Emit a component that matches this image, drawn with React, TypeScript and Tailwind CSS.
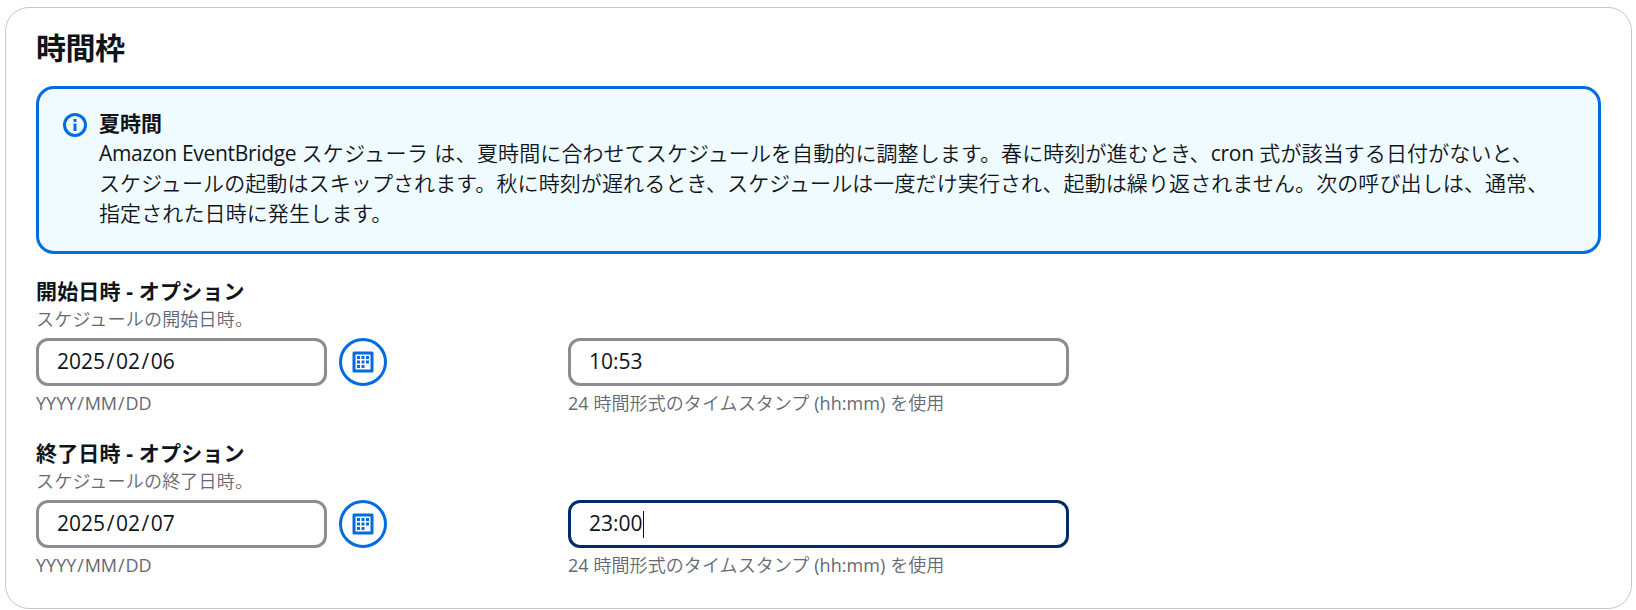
type DateTimeFieldProps = {
  label: string;
  description: string;
  date: string;
  time: string;
  focused?: boolean;
};

const fields: DateTimeFieldProps[] = [
  {
    label: "開始日時 - オプション",
    description: "スケジュールの開始日時。",
    date: "2025/02/06",
    time: "10:53",
  },
  {
    label: "終了日時 - オプション",
    description: "スケジュールの終了日時。",
    date: "2025/02/07",
    time: "23:00",
    focused: true,
  },
];

function InfoIcon() {
  return (
    <svg className="h-6 w-6 shrink-0 text-[#006ce0]" viewBox="0 0 16 16" fill="none" stroke="currentColor" strokeWidth="2">
      <circle cx="8" cy="8" r="7" />
      <path d="M8 12V7M8 6V4" />
    </svg>
  );
}

function CalendarIcon() {
  return (
    <svg className="h-6 w-6" viewBox="0 0 16 16" fill="none" stroke="currentColor" strokeWidth="2">
      <rect x="2" y="2" width="12" height="12" strokeLinejoin="round" />
      <path d="M4 5h2M7 5h2M10 5h2M4 8h2M7 8h2M10 8h2M4 11h2M7 11h2" />
    </svg>
  );
}

function DateTimeField({ label, description, date, time, focused }: DateTimeFieldProps) {
  const [year, month, day] = date.split("/");

  return (
    <section className="h-[162px]">
      <h3 className="text-[21px] leading-[30px] font-bold tracking-[0.17px]">{label}</h3>
      <p className="mt-px text-[18px] leading-[24px] font-[350] tracking-[0.2px] text-[#656871]">{description}</p>
      <div className="mt-[7px] flex">
        <div className="w-[532px]">
          <div className="flex gap-3">
            <div className="flex h-12 w-[291px] items-center rounded-xl border-3 border-[#8c8c94] px-[18px] text-[21px]">
              <span>{year}</span>
              <span className="mx-[1.6px]">/</span>
              <span>{month}</span>
              <span className="mx-[1.6px]">/</span>
              <span>{day}</span>
            </div>
            <button
              type="button"
              className="flex h-12 w-12 items-center justify-center rounded-full border-3 border-[#006ce0] text-[#006ce0]"
              aria-label="カレンダー"
            >
              <CalendarIcon />
            </button>
          </div>
          <p className="mt-[5px] text-[18px] leading-[24px] text-[#656871]">
            YYYY<span className="mx-[0.9px]">/</span>MM<span className="mx-[0.9px]">/</span>DD
          </p>
        </div>
        <div>
          <div
            className={`flex h-12 w-[501px] items-center rounded-xl border-3 px-[18px] text-[21px] ${
              focused ? "border-[#002b66]" : "border-[#8c8c94]"
            }`}
          >
            <span>{time}</span>
            {focused && <span className="h-[27px] w-px bg-[#0f141a]" />}
          </div>
          <p className="mt-[5px] text-[18px] leading-[24px] font-[350] tracking-[0.07px] text-[#656871]">
            <span className="font-normal">24</span> 時間形式のタイムスタンプ <span className="font-normal">(hh:mm)</span> を使用
          </p>
        </div>
      </div>
    </section>
  );
}

export default function App() {
  return (
    <div className="h-[610px] bg-white pt-[7px] pr-1 pl-[5px] font-['Open_Sans','Noto_Sans_CJK_JP',sans-serif] text-[#0f141a]">
      <main className="h-[602px] rounded-3xl border border-[#c6c6cd] px-[30px] pt-[22px]">
        <h2 className="text-[30px] leading-[36px] font-bold tracking-[-0.45px]">時間枠</h2>

        <div className="mt-5 flex h-[168px] gap-3 rounded-[18px] border-3 border-[#006ce0] bg-[#f0fbff] pt-[19px] pl-6">
          <div className="pt-[5px]">
            <InfoIcon />
          </div>
          <div className="text-[21px] leading-[30px]">
            <h3 className="font-bold">夏時間</h3>
            <p className="font-[350] tracking-[0.105px] whitespace-nowrap">
              <span className="font-[450] tracking-[-0.32px]">Amazon EventBridge </span>
              <span className="tracking-[0.4px]">スケジューラ は、</span>
              夏時間に合わせてスケジュールを自動的に調整します。春に時刻が進むとき、
              <span className="font-[450] tracking-[-0.25px]">cron</span> 式が該当する日付がないと、
              <br />
              スケジュールの起動はスキップされます。秋に時刻が遅れるとき、スケジュールは一度だけ実行され、起動は繰り返されません。次の呼び出しは、通常、
              <br />
              指定された日時に発生します。
            </p>
          </div>
        </div>

        <div className="mt-[22px]">
          {fields.map((field) => (
            <DateTimeField key={field.label} {...field} />
          ))}
        </div>
      </main>
    </div>
  );
}
